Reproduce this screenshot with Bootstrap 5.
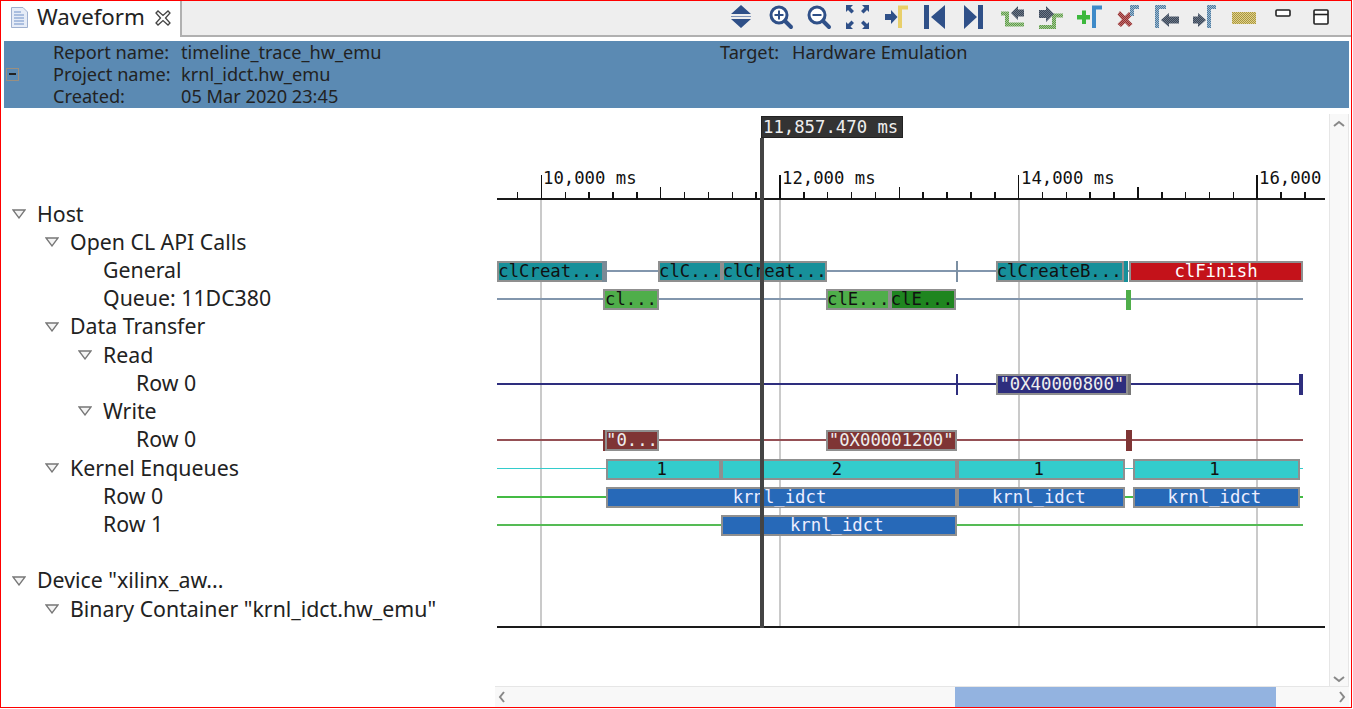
<!DOCTYPE html>
<html lang="en">
<head>
    <meta charset="UTF-8">
    <meta name="viewport" content="width=device-width, initial-scale=1.0">
    <title>Waveform</title>
    <link href="https://cdn.jsdelivr.net/npm/bootstrap@5.3.3/dist/css/bootstrap.min.css" rel="stylesheet">
    <style>
        body { background: #fff; overflow: hidden; font-family: "Noto Sans", sans-serif; color: #222; }
        .frame { width: 1352px; height: 708px; border: 1px solid #f00; }
        .tab-strip { height: 36px; background: #eee; border-bottom: 2px solid #b0b0b0; }
        .wave-tab { width: 181px; height: 36px; background: #fff; border-right: 2px solid #b0b0b0; padding: 0 0 3px 10px; font-size: 22.3px; margin-bottom: -2px; }
        .wave-tab .tab-title { margin: 0 10px 2px 9px; }
        .tool-row { margin-left: 540px; gap: .7px; }
        .tool-row svg { width: 38px; height: 34px; flex: none; }
        .report-head { height: 67px; margin: 4px 2px 0 3px; background: #5b8ab3; font-size: 18.2px; line-height: 22px; }
        .report-head .head-col { align-self: flex-start; }
        .collapse-box { width: 13px; height: 13px; margin: 0 0 0 2px; border: 1.5px solid #9a8f80; flex: none; }
        .collapse-box::after { content: ""; display: block; width: 7px; height: 2px; margin: 4px auto 0; background: #222; }
        .head-labels { width: 128px; margin-left: 34px; }
        .head-values { width: 539px; }
        .head-target { width: 72px; }
        .main-area { height: 578px; }
        .tree-col { width: 494px; flex: none; padding-top: 91.6px; font-size: 21.3px; }
        .tree-row { height: 28.23px; line-height: 28.23px; white-space: nowrap; }
        .lvl-0 { padding-left: 11px; }
        .lvl-1 { padding-left: 44px; }
        .lvl-2 { padding-left: 77px; }
        .lvl-3 { padding-left: 135px; }
        .lvl-2.leaf { padding-left: 102px; }
        .tree-tri { width: 14px; height: 10px; margin-right: 11px; flex: none; }
        .wave-canvas { width: 834px; flex: none; position: relative; overflow: hidden; }
        .wave-item { position: absolute; }
        .wave-bar { position: absolute; box-shadow: inset 0 0 0 2px #8f8f8f; font-family: "DejaVu Sans Mono", monospace; font-size: 17.3px; line-height: 20px; white-space: nowrap; overflow: hidden; text-align: center; }
        .wave-bar.start { text-align: left; padding-left: 1px; }
        .wave-bar.run-bar { padding-right: 4px; }
        .axis-label { position: absolute; font-family: "DejaVu Sans Mono", monospace; font-size: 17.3px; line-height: 20px; color: #111; white-space: nowrap; }
        .cursor-tag { position: absolute; background: #333; color: #eee; border: 1px solid #222; font-family: "DejaVu Sans Mono", monospace; font-size: 17.3px; line-height: 20px; padding-left: 1px; white-space: nowrap; }
        .v-scroll { width: 20px; flex: none; background: #f8f8f8; border-left: 1px solid #e6e6e6; border-right: 1px solid #e6e6e6; margin-top: 6px; padding-top: 3px; }
        .h-scroll { height: 21px; margin-left: 494px; margin-right: 2px; background: #f8f8f8; border-top: 1px solid #e6e6e6; }
        .h-thumb { width: 321px; margin-left: 446px; background: #93b3e0; }
        .scroll-arrow { width: 14px; height: 14px; flex: none; }
    </style>
</head>
<body>
    <svg width="0" height="0" class="d-block" style="position:absolute">
        <defs>
            <pattern id="dithGrey" width="2" height="2" patternUnits="userSpaceOnUse"><rect width="2" height="2" fill="#6b7787"/><rect width="1" height="1" fill="#3c4758"/><rect x="1" y="1" width="1" height="1" fill="#3c4758"/></pattern>
            <pattern id="dithGreen" width="2" height="2" patternUnits="userSpaceOnUse"><rect width="2" height="2" fill="#a6cc95"/><rect width="1" height="1" fill="#5e9a4a"/><rect x="1" y="1" width="1" height="1" fill="#5e9a4a"/></pattern>
            <pattern id="dithBlue" width="2" height="2" patternUnits="userSpaceOnUse"><rect width="2" height="2" fill="#9dbad2"/><rect width="1" height="1" fill="#4d7a9e"/><rect x="1" y="1" width="1" height="1" fill="#4d7a9e"/></pattern>
            <pattern id="dithRed" width="2" height="2" patternUnits="userSpaceOnUse"><rect width="2" height="2" fill="#c07070"/><rect width="1" height="1" fill="#913030"/><rect x="1" y="1" width="1" height="1" fill="#913030"/></pattern>
            <pattern id="dithYellow" width="2" height="2" patternUnits="userSpaceOnUse"><rect width="2" height="2" fill="#e0d08a"/><rect width="1" height="1" fill="#a8973f"/><rect x="1" y="1" width="1" height="1" fill="#a8973f"/></pattern>
        </defs>
    </svg>

    <div class="frame d-flex flex-column">
        <!-- tab and toolbar -->
        <div class="tab-strip d-flex">
            <div class="wave-tab d-flex align-items-center flex-none">
                <svg width="17" height="21" viewBox="0 0 17 21">
                    <path d="M.5.5H12L16.5 5V20.5H.5Z" fill="#e6ecf7" stroke="#9fb0cf"/>
                    <path d="M3 5H10M3 8H13M3 11H13M3 14H13M3 17H13" stroke="#6f8fc8" stroke-width="1.2"/>
                </svg>
                <span class="tab-title">Waveform</span>
                <svg width="16" height="16" viewBox="0 0 16 16">
                    <path d="M1 3L3 1L8 5.500L13 1L15 3L10.500 8L15 13L13 15L8 10.500L3 15L1 13L5.500 8Z" fill="#fff" stroke="#444" stroke-width="1.300"/>
                </svg>
            </div>
            <div class="tool-row d-flex">
                <svg viewBox="0 0 38 34"><path d="M19 4L29 13H9ZM9 18H29L19 27Z" fill="#2f5088"/><path d="M9 15.500H29" stroke="#7d93b8"/></svg>
                <svg viewBox="0 0 38 34"><circle cx="18" cy="14" r="8" fill="#fff" stroke="#2f5088" stroke-width="3"/><path d="M24 20L30 26" stroke="#2f5088" stroke-width="4" stroke-linecap="round"/><path d="M18 9.500V18.500M13.500 14H22.500" stroke="#2f5088" stroke-width="2"/></svg>
                <svg viewBox="0 0 38 34"><circle cx="18" cy="14" r="8" fill="#fff" stroke="#2f5088" stroke-width="3"/><path d="M24 20L30 26" stroke="#2f5088" stroke-width="4" stroke-linecap="round"/><path d="M13.500 14H22.500" stroke="#2f5088" stroke-width="2"/></svg>
                <svg viewBox="0 0 38 34"><path d="M8 4H15L12.500 6.500L16 10L13.500 12.500L10 9L8 11ZM31 4H24L26.500 6.500L23 10L25.500 12.500L29 9L31 11ZM8 28H15L12.500 25.500L16 22L13.500 19.500L10 23L8 21ZM31 28H24L26.500 25.500L23 22L25.500 19.500L29 23L31 21Z" fill="#2f5088"/></svg>
                <svg viewBox="0 0 38 34"><path d="M8 13H14V9L20.500 16L14 23V19H8Z" fill="#2f5088"/><path d="M23 27V6.500H31" fill="none" stroke="#e8cf6a" stroke-width="4"/></svg>
                <svg viewBox="0 0 38 34"><path d="M9 4H14V28H9ZM30 4V28L16 16Z" fill="#2f5088"/></svg>
                <svg viewBox="0 0 38 34"><path d="M10 4L23 16L10 28ZM24 4H29V28H24Z" fill="#2f5088"/></svg>
                <svg viewBox="0 0 38 34"><path d="M8 12.500H14V23.500H31" fill="none" stroke="url(#dithGreen)" stroke-width="4"/><path d="M18 12L25 5V8.500H31V15.500H25V19Z" fill="url(#dithGrey)"/></svg>
                <svg viewBox="0 0 38 34"><path d="M7 26H22V14.500H31" fill="none" stroke="url(#dithGreen)" stroke-width="4"/><path d="M7 9H14V5L22 13L14 21V17H7Z" fill="url(#dithGrey)"/></svg>
                <svg viewBox="0 0 38 34"><path d="M7 14H12V9.500H16V14H20V18.500H16V23H12V18.500H7Z" fill="#3cb83c"/><path d="M24 27V6.500H32" fill="none" stroke="#3e8ac8" stroke-width="4"/></svg>
                <svg viewBox="0 0 38 34"><path d="M11 10L16 15L20 11L23.500 14L19 18.500L23.500 23L20 26L16 22L12 26L8.500 23L13 18.500L8.500 13.500Z" fill="url(#dithRed)"/><path d="M23 15V6H30" fill="none" stroke="url(#dithBlue)" stroke-width="4"/></svg>
                <svg viewBox="0 0 38 34"><path d="M9 27V6H18" fill="none" stroke="url(#dithBlue)" stroke-width="4"/><path d="M13 19L21 12V15.500H31V22.500H21V26Z" fill="url(#dithGrey)"/></svg>
                <svg viewBox="0 0 38 34"><path d="M7 15.500H12V12L20 19L12 26V22.500H7Z" fill="url(#dithGrey)"/><path d="M23 27V6H30" fill="none" stroke="url(#dithBlue)" stroke-width="4"/></svg>
                <svg viewBox="0 0 38 34"><rect x="7" y="11" width="24" height="12" fill="url(#dithYellow)"/></svg>
                <svg viewBox="0 0 38 34"><rect x="12" y="9" width="14" height="6" rx="1" fill="#fff" stroke="#222" stroke-width="1.600"/></svg>
                <svg viewBox="0 0 38 34"><rect x="12" y="9" width="14" height="14" rx="1" fill="#fff" stroke="#222" stroke-width="1.600"/><path d="M12 13.500H26" stroke="#222" stroke-width="1.600"/></svg>
            </div>
        </div>

        <!-- report details -->
        <div class="report-head d-flex align-items-center">
            <div class="collapse-box"></div>
            <div class="head-col head-labels">
                <div>Report name:</div>
                <div>Project name:</div>
                <div>Created:</div>
            </div>
            <div class="head-col head-values">
                <div>timeline_trace_hw_emu</div>
                <div>krnl_idct.hw_emu</div>
                <div>05 Mar 2020 23:45</div>
            </div>
            <div class="head-col head-target">Target:</div>
            <div class="head-col">Hardware Emulation</div>
        </div>

        <div class="main-area d-flex">
            <div class="tree-col" id="tree"></div>
            <div class="wave-canvas" id="canvas"></div>
            <div class="v-scroll d-flex flex-column justify-content-between align-items-center">
                <svg class="scroll-arrow" viewBox="0 0 14 14"><path d="M2 9L7 5L12 9" fill="none" stroke="#888" stroke-width="2"/></svg>
                <svg class="scroll-arrow" viewBox="0 0 14 14"><path d="M2 5L7 9L12 5" fill="none" stroke="#888" stroke-width="2"/></svg>
            </div>
        </div>

        <div class="h-scroll d-flex align-items-stretch position-relative">
            <svg class="scroll-arrow align-self-center" viewBox="0 0 14 14"><path d="M9 2L5 7L9 12" fill="none" stroke="#888" stroke-width="2"/></svg>
            <div class="h-thumb"></div>
            <svg class="scroll-arrow align-self-center ms-auto" viewBox="0 0 14 14"><path d="M5 2L9 7L5 12" fill="none" stroke="#888" stroke-width="2"/></svg>
        </div>
    </div>

    <script>
        // Tree rows on the left: [level, label, has arrow]
        const treeRows = [
            [0, 'Host', true], [1, 'Open CL API Calls', true], [2, 'General', false], [2, 'Queue: 11DC380', false],
            [1, 'Data Transfer', true], [2, 'Read', true], [3, 'Row 0', false], [2, 'Write', true], [3, 'Row 0', false],
            [1, 'Kernel Enqueues', true], [2, 'Row 0', false], [2, 'Row 1', false], null,
            [0, 'Device "xilinx_aw...', true], [1, 'Binary Container "krnl_idct.hw_emu"', true]
        ];
        const tree = document.getElementById('tree');
        const triangle = '<svg class="tree-tri" viewBox="0 0 14 10"><path d="M1 1H13L7 9Z" fill="#f4f4f4" stroke="#777" stroke-width="1.3"/></svg>';
        treeRows.forEach(row => {
            if (!row) { tree.innerHTML += '<div class="tree-row"></div>'; return; }
            const [level, label, arrow] = row;
            const leaf = !arrow && level === 2 ? ' leaf' : '';
            tree.innerHTML += `<div class="tree-row d-flex align-items-center lvl-${level}${leaf}">${arrow ? triangle : ''}<span>${label.replace(/"/g, '&quot;')}</span></div>`;
        });

        // Waveform, all coordinates as measured on the picture
        const originX = 495, originY = 108;
        const canvas = document.getElementById('canvas');

        function rect(x1, y1, x2, y2, color) {
            const el = document.createElement('div');
            el.className = 'wave-item';
            el.style.cssText = `left:${x1 - originX}px;top:${y1 - originY}px;width:${x2 - x1}px;height:${y2 - y1}px;background:${color}`;
            canvas.appendChild(el);
        }
        function bar(x1, x2, cy, fill, text, textColor, mode) {
            const el = document.createElement('div');
            el.className = 'wave-bar' + (mode ? ' ' + mode : '');
            el.textContent = text || '';
            el.style.cssText = `left:${x1 - originX}px;top:${cy - 10.5 - originY}px;width:${x2 - x1}px;height:21px;background:${fill};color:${textColor || '#111'}`;
            canvas.appendChild(el);
        }
        function label(x, y, text) {
            const el = document.createElement('div');
            el.className = 'axis-label';
            el.style.cssText = `left:${x - originX}px;top:${y - originY}px`;
            el.textContent = text;
            canvas.appendChild(el);
        }

        // grid lines
        [541, 780, 1019, 1257].forEach(x => rect(x - 1, 199, x + 1, 627, '#cacaca'));

        // ruler
        rect(497, 198, 1325, 200, '#1a1a1a');
        rect(497, 626, 1325, 628, '#1a1a1a');
        const tickStart = 517.3, tickStep = 23.86;
        for (let i = 0; i < 34; i++) {
            const x = tickStart + tickStep * i;
            const kind = (i - 1) % 10 === 0 ? 24 : (i - 1) % 5 === 0 ? 12 : 7;
            rect(x - 0.5, 199 - kind, x + 1, 199, '#111');
        }
        label(543, 168, '10,000 ms');
        label(782, 168, '12,000 ms');
        label(1021, 168, '14,000 ms');
        label(1259, 168, '16,000');

        const teal = '#17909a', green = '#4fae4a', darkGreen = '#1f8520', navy = '#2e2e7e', maroon = '#7f3535', cyan = '#33cccc', blue = '#2769b8';
        const grey = '#8296ad';

        // General
        rect(497, 270, 1303, 272, grey);
        bar(497.3, 607, 271.3, teal, 'clCreat...', '#111', 'start');
        rect(602, 261, 607, 281.500, '#7b8a96');
        bar(658, 721.7, 271.3, teal, 'clC...', '#111', 'start');
        bar(721.7, 826.7, 271.3, teal, 'clCreat...', '#111', 'start');
        rect(955.700, 261, 958.500, 281.500, '#7b8fa3');
        bar(995.7, 1124, 271.3, teal, 'clCreateB...', '#111', 'start');
        rect(1124, 261, 1128, 281.500, teal);
        bar(1129, 1303, 271.3, '#c4121a', 'clFinish', '#fff');

        // Queue
        rect(497, 298, 1303, 300, grey);
        bar(603, 659, 299.7, green, 'cl...', '#111');
        bar(826, 889.7, 299.7, green, 'clE...', '#111', 'start');
        bar(889.7, 956.3, 299.7, darkGreen, 'clE...', '#111', 'start');
        rect(1126, 289.500, 1130.700, 310, green);

        // Read row
        rect(497, 383, 1303, 385, navy);
        rect(955.700, 374, 958.500, 394.500, navy);
        bar(995.7, 1128, 384.2, navy, '"0X40000800"', '#eee');
        rect(1128, 374, 1131, 394.500, '#777');
        rect(1299, 374, 1303, 394.500, navy);

        // Write row
        rect(497, 439, 1303, 441, '#955055');
        rect(603, 430.300, 606, 451, maroon);
        bar(605, 659, 440.7, maroon, '"0...', '#eee');
        bar(826, 956.5, 440.7, maroon, '"0X00001200"', '#eee');
        rect(1126, 430.300, 1132, 451, maroon);

        // Kernel enqueues
        rect(497, 467.700, 1303, 469.500, cyan);
        bar(606, 721.3, 469, cyan, '1', '#111', 'run-bar');
        bar(721, 957, 469, cyan, '2', '#111', 'run-bar');
        bar(957, 1124.5, 469, cyan, '1', '#111', 'run-bar');
        bar(1132.7, 1300, 469, cyan, '1', '#111', 'run-bar');

        rect(497, 496, 1303, 498, '#44bb44');
        bar(606, 957, 497.3, blue, 'krnl_idct', '#eef', 'run-bar');
        bar(957, 1124.5, 497.3, blue, 'krnl_idct', '#eef', 'run-bar');
        bar(1132.7, 1300, 497.3, blue, 'krnl_idct', '#eef', 'run-bar');

        rect(497, 524, 1303, 526, '#55bb55');
        bar(721, 956.5, 525.5, blue, 'krnl_idct', '#eef', 'run-bar');

        // cursor goes on top of everything
        rect(760, 138, 764, 627.500, '#444');
        const tag = document.createElement('div');
        tag.className = 'cursor-tag';
        tag.style.cssText = `left:${761 - originX}px;top:${116 - originY}px;width:142px;height:22px`;
        tag.textContent = '11,857.470 ms';
        canvas.appendChild(tag);
    </script>
    <script src="https://cdn.jsdelivr.net/npm/bootstrap@5.3.3/dist/js/bootstrap.bundle.min.js"></script>
</body>
</html>
